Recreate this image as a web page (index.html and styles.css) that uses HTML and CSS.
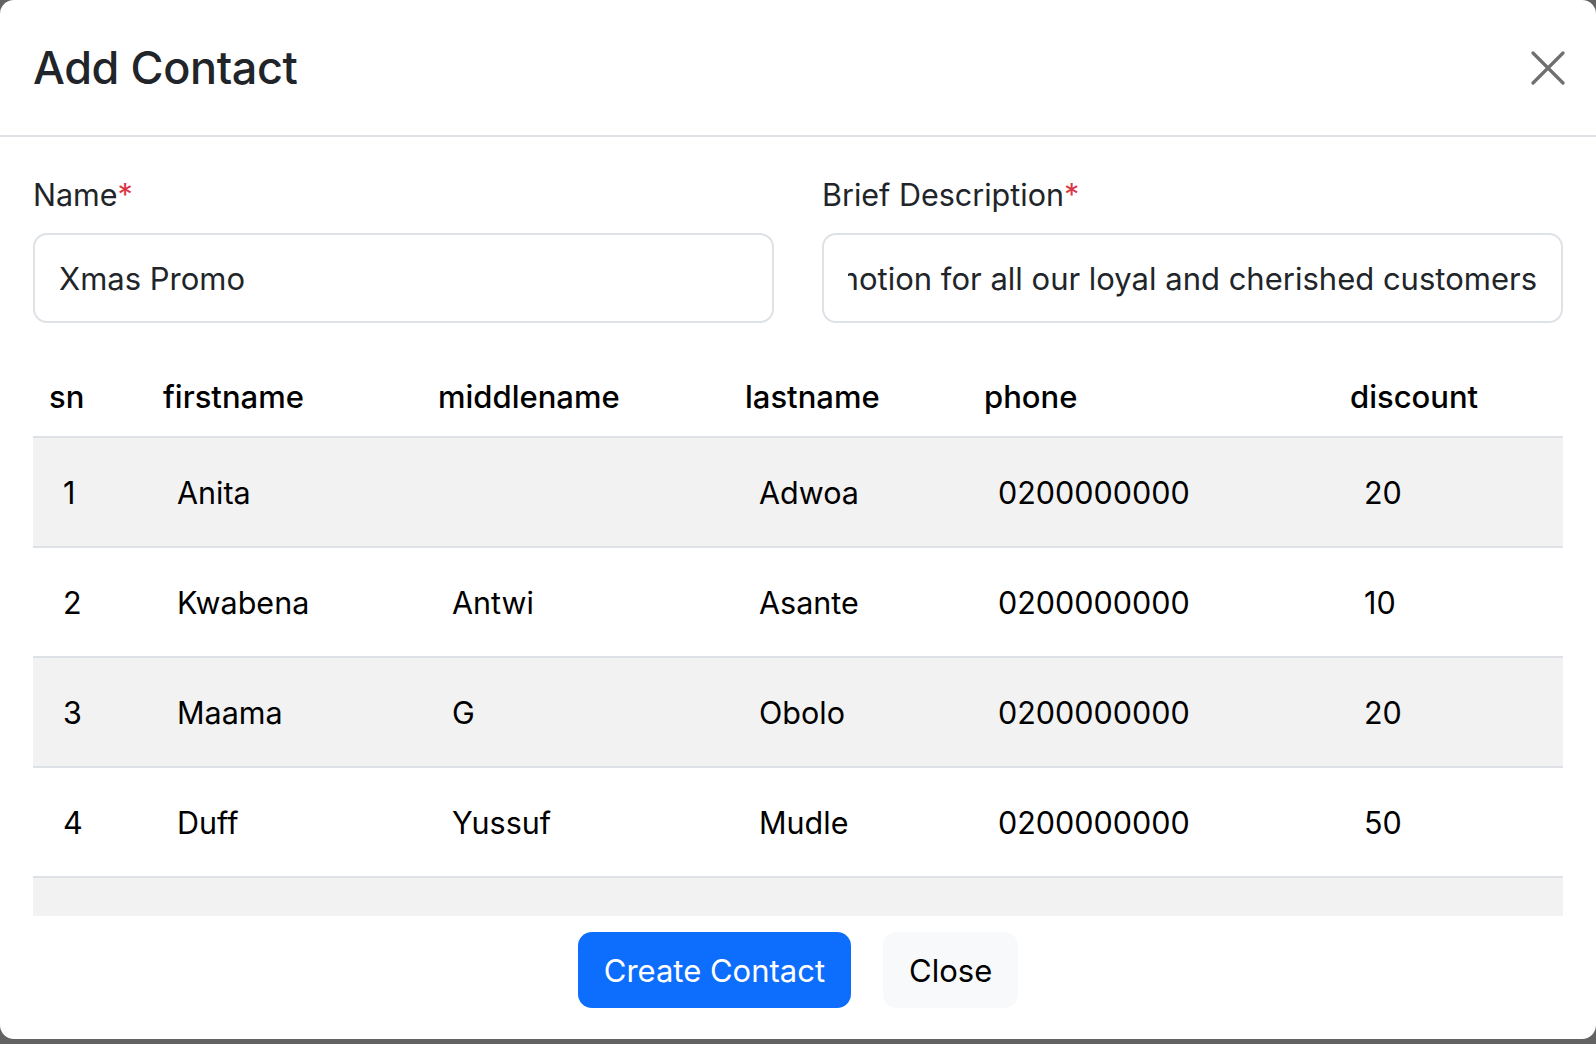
FILE: index.html
```html
<!DOCTYPE html>
<html lang="en">
<head>
<meta charset="utf-8">
<title>Add Contact</title>
<link rel="stylesheet" href="styles.css">
</head>
<body>
<div class="modal">
  <div class="modal-header">
    <h3 class="modal-title">Add Contact</h3>
    <button class="btn-close" aria-label="Close">
      <svg width="34" height="34" viewBox="0 0 34 34"><path d="M2 2 L32 32 M32 2 L2 32" stroke="#6f6f6f" stroke-width="3.2" stroke-linecap="round" fill="none"/></svg>
    </button>
  </div>
  <div class="modal-body">
    <div class="fields">
      <div class="field">
        <label class="label">Name<span class="req">*</span></label>
        <div class="input"><div class="clip"><span>Xmas Promo</span></div></div>
      </div>
      <div class="field">
        <label class="label">Brief Description<span class="req">*</span></label>
        <div class="input"><div class="clip end"><span>Christmas promotion for all our loyal and cherished customers</span></div></div>
      </div>
    </div>
    <div class="table-wrap">
      <table class="table">
        <colgroup>
          <col class="c-sn"><col class="c-first"><col class="c-middle"><col class="c-last"><col class="c-phone"><col class="c-disc">
        </colgroup>
        <thead>
          <tr><th>sn</th><th>firstname</th><th>middlename</th><th>lastname</th><th>phone</th><th>discount</th></tr>
        </thead>
        <tbody>
          <tr><td>1</td><td>Anita</td><td></td><td>Adwoa</td><td>0200000000</td><td>20</td></tr>
          <tr><td>2</td><td>Kwabena</td><td>Antwi</td><td>Asante</td><td>0200000000</td><td>10</td></tr>
          <tr><td>3</td><td>Maama</td><td>G</td><td>Obolo</td><td>0200000000</td><td>20</td></tr>
          <tr><td>4</td><td>Duff</td><td>Yussuf</td><td>Mudle</td><td>0200000000</td><td>50</td></tr>
          <tr><td></td><td></td><td></td><td></td><td></td><td></td></tr>
        </tbody>
      </table>
    </div>
  </div>
  <div class="modal-footer">
    <button class="btn btn-primary">Create Contact</button>
    <button class="btn btn-light">Close</button>
  </div>
</div>
</body>
</html>
```

FILE: styles.css
```css
* { box-sizing: border-box; }
html, body { margin: 0; padding: 0; }
body {
  background: #636363;
  height: 1044px;
  overflow: hidden;
  font-family: Inter, "Noto Sans", sans-serif;
  color: #212529;
}
.modal {
  background: #fff;
  height: 1039px;
  border-radius: 14px;
  display: flex;
  flex-direction: column;
  overflow: hidden;
}
.modal-header {
  height: 137px;
  flex: none;
  border-bottom: 2px solid #dee2e6;
  display: flex;
  align-items: center;
  justify-content: space-between;
  padding: 0 31px 0 33px;
}
.modal-title {
  margin: 0;
  font-size: 45px;
  font-weight: 500;
  letter-spacing: -0.4px;
  color: #212529;
  line-height: 1;
}
.btn-close {
  border: 0;
  background: none;
  padding: 0;
  width: 34px;
  height: 34px;
  display: flex;
}
.modal-body {
  padding: 37px 33px 0;
  flex: none;
}
.fields {
  display: grid;
  grid-template-columns: minmax(0, 1fr) minmax(0, 1fr);
  column-gap: 48px;
}
.field { min-width: 0; }
.label {
  display: block;
  font-size: 30.5px;
  line-height: 42px;
  margin-bottom: 17px;
  color: #212529;
}
.req { color: #dc3545; }
.input {
  height: 90px;
  border: 2px solid #dee2e6;
  border-radius: 14px;
  padding: 0 24px;
  display: flex;
  align-items: center;
  font-size: 31px;
  color: #212529;
  min-width: 0;
}
.clip {
  overflow: hidden;
  white-space: nowrap;
  display: flex;
  width: 100%;
  min-width: 0;
}
.clip.end { justify-content: flex-end; }
.clip span { flex: none; }
.table-wrap {
  margin-top: 27px;
  height: 566px;
  overflow: hidden;
}
.table {
  width: 100%;
  border-collapse: collapse;
  table-layout: fixed;
  color: #000;
  font-size: 30.5px;
  line-height: 42px;
}
.c-sn { width: 114px; }
.c-first { width: 275px; }
.c-middle { width: 307px; }
.c-last { width: 239px; }
.c-phone { width: 366px; }
.c-disc { width: 229px; }
.table th {
  text-align: left;
  font-weight: 500;
  font-size: 31px;
  padding: 26px 16px 18px;
  border-bottom: 2px solid #dee2e6;
}
.table td {
  padding: 34px 16px 32px 30px;
  border-bottom: 2px solid #dee2e6;
  height: 110px;
}
.table tbody tr:nth-child(odd) td { background: #f2f2f2; }
.modal-footer {
  display: flex;
  justify-content: center;
  gap: 32px;
  padding-top: 16px;
}
.btn {
  height: 76px;
  border: 0;
  border-radius: 14px;
  padding: 0 26px;
  font-family: Inter, "Noto Sans", sans-serif;
  font-size: 31px;
}
.btn-primary { background: #0d6efd; color: #fff; }
.btn-light { background: #f8f9fa; color: #000; }
```
